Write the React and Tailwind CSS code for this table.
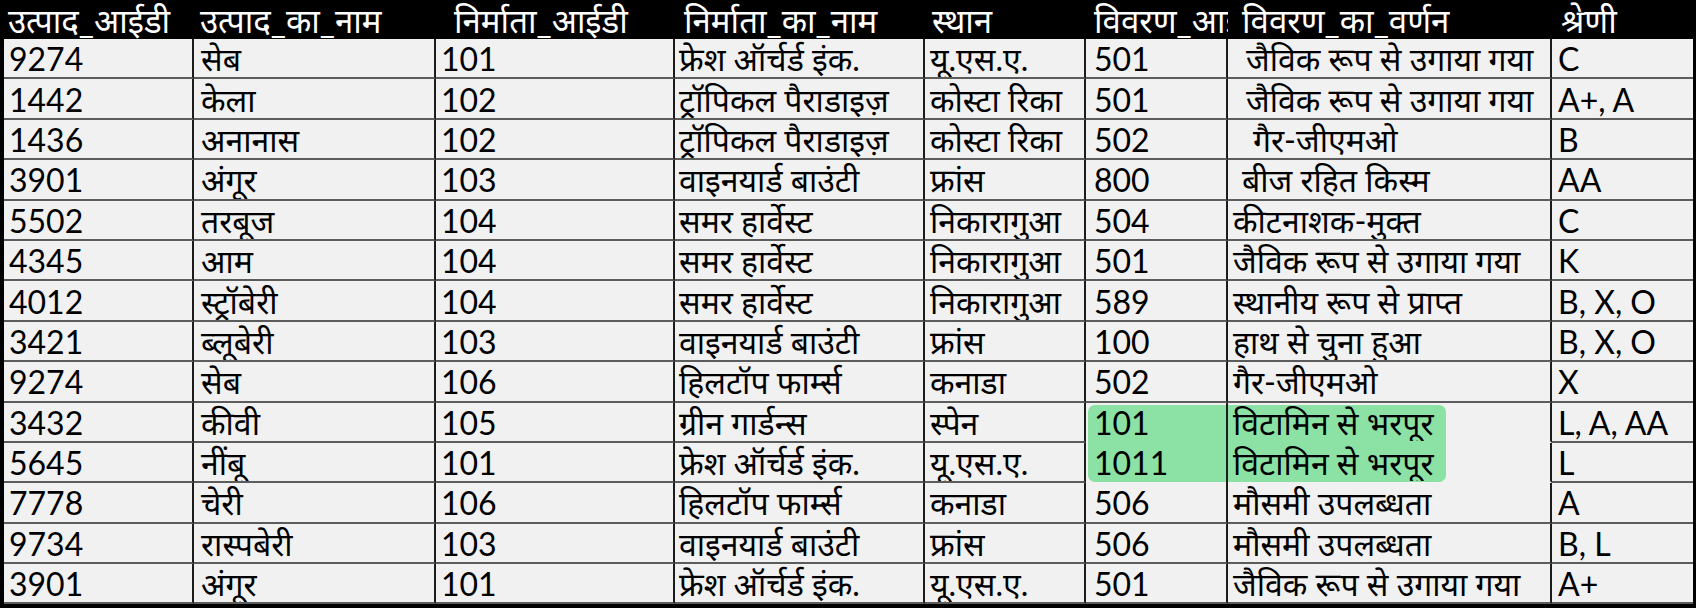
import React from "react";

const rows = [
  ["9274", "सेब", "101", "फ्रेश ऑर्चर्ड इंक.", "यू.एस.ए.", "501", "जैविक रूप से उगाया गया", "C", "pl-[18px]"],
  ["1442", "केला", "102", "ट्रॉपिकल पैराडाइज़", "कोस्टा रिका", "501", "जैविक रूप से उगाया गया", "A+, A", "pl-[18px]"],
  ["1436", "अनानास", "102", "ट्रॉपिकल पैराडाइज़", "कोस्टा रिका", "502", "गैर-जीएमओ", "B", "pl-[25px]"],
  ["3901", "अंगूर", "103", "वाइनयार्ड बाउंटी", "फ्रांस", "800", "बीज रहित किस्म", "AA", "pl-[14px]"],
  ["5502", "तरबूज", "104", "समर हार्वेस्ट", "निकारागुआ", "504", "कीटनाशक-मुक्त", "C", "pl-[5px]"],
  ["4345", "आम", "104", "समर हार्वेस्ट", "निकारागुआ", "501", "जैविक रूप से उगाया गया", "K", "pl-[5px]"],
  ["4012", "स्ट्रॉबेरी", "104", "समर हार्वेस्ट", "निकारागुआ", "589", "स्थानीय रूप से प्राप्त", "B, X, O", "pl-[5px]"],
  ["3421", "ब्लूबेरी", "103", "वाइनयार्ड बाउंटी", "फ्रांस", "100", "हाथ से चुना हुआ", "B, X, O", "pl-[5px]"],
  ["9274", "सेब", "106", "हिलटॉप फार्म्स", "कनाडा", "502", "गैर-जीएमओ", "X", "pl-[5px]"],
  ["3432", "कीवी", "105", "ग्रीन गार्डन्स", "स्पेन", "101", "विटामिन से भरपूर", "L, A, AA", "pl-[5px]"],
  ["5645", "नींबू", "101", "फ्रेश ऑर्चर्ड इंक.", "यू.एस.ए.", "1011", "विटामिन से भरपूर", "L", "pl-[5px]"],
  ["7778", "चेरी", "106", "हिलटॉप फार्म्स", "कनाडा", "506", "मौसमी उपलब्धता", "A", "pl-[5px]"],
  ["9734", "रास्पबेरी", "103", "वाइनयार्ड बाउंटी", "फ्रांस", "506", "मौसमी उपलब्धता", "B, L", "pl-[5px]"],
  ["3901", "अंगूर", "101", "फ्रेश ऑर्चर्ड इंक.", "यू.एस.ए.", "501", "जैविक रूप से उगाया गया", "A+", "pl-[5px]"],
];

const pads = ["pl-[5px]", "pl-[7px]", "pl-[5px]", "pl-[4px]", "pl-[5px]", "pl-[8px]", "", "pl-[6px]"];

const heads = [
  ["उत्पाद_आईडी", "pl-[4px]"],
  ["उत्पाद_का_नाम", "pl-[6px]"],
  ["निर्माता_आईडी", "pl-[18px]"],
  ["निर्माता_का_नाम", "pl-[9px]"],
  ["स्थान", "pl-[7px]"],
  ["विवरण_आईडी", "pl-[8px] overflow-hidden"],
  ["विवरण_का_वर्णन", "pl-[14px]"],
  ["श्रेणी", "pl-[9px]"],
];

const Cell = ({ children, className }) => (
  <div
    className={`flex items-center pt-[2px] overflow-hidden whitespace-nowrap border-b-2 border-b-[#5c5c5c] ${className}`}
  >
    {children}
  </div>
);

export default function App() {
  return (
    <div className="w-[1696px] h-[608px] bg-black overflow-hidden">
      <div
        className="relative w-[1696px] h-[608px] border-l-4 border-r-[3px] border-b-4 border-black bg-[#f1f1f1] text-[32px] leading-none text-black"
        style={{ fontFamily: "Lato, 'Noto Sans', sans-serif" }}
      >
        <div className="grid grid-cols-[190px_242px_239px_250px_161px_142px_324px_141px] h-[39px] bg-black text-white text-[33px]">
          {heads.map(([t, c], j) => (
            <div key={j} className={`flex items-center pt-[1px] whitespace-nowrap ${c}`}>
              {t}
            </div>
          ))}
        </div>

        {/* highlighter over the two vitamin rows */}
        <div className="absolute left-[1084px] top-[405px] w-[358px] h-[77px] rounded-[7px] bg-[#8ce2a4]" />
        <div className="absolute left-[1222px] top-[403px] w-[2px] h-[81px] bg-[#1c1c1c]" />

        <div className="relative">
          {rows.map((r, i) => (
            <div
              key={i}
              className="grid grid-cols-[190px_242px_239px_250px_161px_142px_324px_141px] h-[40.4px]"
            >
              {r.slice(0, 8).map((v, j) => (
                <Cell
                  key={j}
                  className={`${j === 6 ? r[8] : pads[j]} ${j < 7 ? "border-r-2 border-r-[#1c1c1c]" : ""} ${
                    (i === 9 || i === 10) && (j === 5 || j === 6) ? "border-b-transparent" : ""
                  }`}
                >
                  {v}
                </Cell>
              ))}
            </div>
          ))}
        </div>
      </div>
    </div>
  );
}
